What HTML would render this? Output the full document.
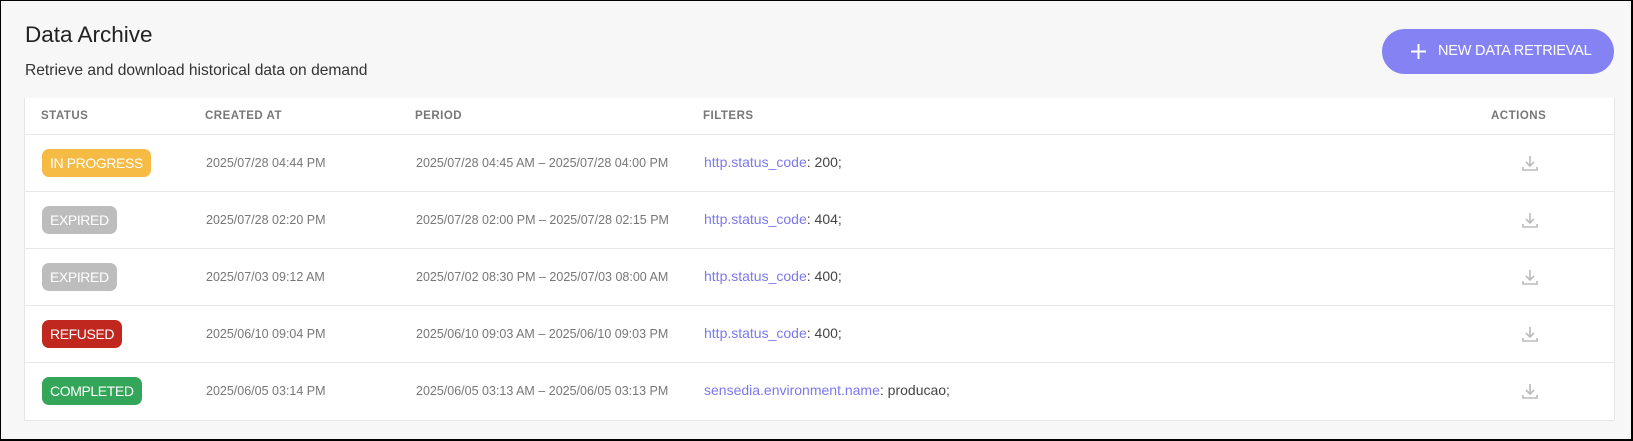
<!DOCTYPE html>
<html><head><meta charset="utf-8"><style>
*{box-sizing:border-box;margin:0;padding:0}
body{width:1633px;height:441px;background:#f7f7f7;font-family:"Liberation Sans",sans-serif;overflow:hidden}
.frame{position:absolute;left:0;top:0;width:1633px;height:441px;border:1px solid #000;border-right:2px solid #000;border-bottom:2px solid #000;background:#f7f7f7}
h1{position:absolute;left:24px;top:21px;font-size:22.5px;font-weight:normal;color:#222}
.sub{position:absolute;left:24px;top:61px;font-size:15.6px;color:#333}
.btn{position:absolute;left:1381px;top:28px;width:232px;height:45px;border-radius:23px;background:#8582f4;color:#fff;font-size:14.5px;line-height:45px;padding-left:56px;letter-spacing:-0.2px}
.btn svg{position:absolute;left:28px;top:14px}
.tbl{position:absolute;left:23px;top:97px;width:1591px;height:323px;background:#fff;border:1px solid #e6e6e6;border-top:none}
.hd{height:37px;border-bottom:1px solid #e8e8e8;position:relative}
.hd span{position:absolute;top:12px;font-size:11.5px;font-weight:bold;color:#777;letter-spacing:.5px}
.row{height:57px;border-bottom:1px solid #e8e8e8;position:relative;font-size:12.5px;color:#777}
.row:last-child{border-bottom:none}
.row>*{position:absolute}
.b{left:17px;top:14px;height:28px;line-height:28px;border-radius:7px;color:#fff;font-size:14px;padding:0 8px;letter-spacing:-0.4px}
.c{left:181px;top:21px}.p{left:391px;top:21px}
.f{left:679px;top:19px;font-size:14px;color:#444}.f i{font-style:normal;color:#7b78f0}
.dl{left:1496px;top:19px}
</style></head><body><div class="frame">
<h1>Data Archive</h1>
<div class="sub">Retrieve and download historical data on demand</div>
<div class="btn"><svg width="17" height="17"><path d="M8.5 1V16M1 8.5H16" stroke="#fff" stroke-width="2"/></svg>NEW DATA RETRIEVAL</div>
<div class="tbl">
<div class="hd"><span style="left:16px">STATUS</span><span style="left:180px">CREATED AT</span><span style="left:390px">PERIOD</span><span style="left:678px">FILTERS</span><span style="left:1466px">ACTIONS</span></div>
<div class="row"><span class="b" style="background:#f5bb45">IN PROGRESS</span><span class="c">2025/07/28 04:44 PM</span><span class="p">2025/07/28 04:45 AM – 2025/07/28 04:00 PM</span><span class="f"><i>http.status_code</i>: 200;</span><svg class="dl" width="18" height="18"><path d="M9 2V12M5 8L9 12L13 8M2 13V16H16V13" stroke="#bbb" stroke-width="1.6" fill="none"/></svg></div>
<div class="row"><span class="b" style="background:#bdbdbd">EXPIRED</span><span class="c">2025/07/28 02:20 PM</span><span class="p">2025/07/28 02:00 PM – 2025/07/28 02:15 PM</span><span class="f"><i>http.status_code</i>: 404;</span><svg class="dl" width="18" height="18"><path d="M9 2V12M5 8L9 12L13 8M2 13V16H16V13" stroke="#bbb" stroke-width="1.6" fill="none"/></svg></div>
<div class="row"><span class="b" style="background:#bdbdbd">EXPIRED</span><span class="c">2025/07/03 09:12 AM</span><span class="p">2025/07/02 08:30 PM – 2025/07/03 08:00 AM</span><span class="f"><i>http.status_code</i>: 400;</span><svg class="dl" width="18" height="18"><path d="M9 2V12M5 8L9 12L13 8M2 13V16H16V13" stroke="#bbb" stroke-width="1.6" fill="none"/></svg></div>
<div class="row"><span class="b" style="background:#c0271f">REFUSED</span><span class="c">2025/06/10 09:04 PM</span><span class="p">2025/06/10 09:03 AM – 2025/06/10 09:03 PM</span><span class="f"><i>http.status_code</i>: 400;</span><svg class="dl" width="18" height="18"><path d="M9 2V12M5 8L9 12L13 8M2 13V16H16V13" stroke="#bbb" stroke-width="1.6" fill="none"/></svg></div>
<div class="row"><span class="b" style="background:#34a65a">COMPLETED</span><span class="c">2025/06/05 03:14 PM</span><span class="p">2025/06/05 03:13 AM – 2025/06/05 03:13 PM</span><span class="f"><i>sensedia.environment.name</i>: producao;</span><svg class="dl" width="18" height="18"><path d="M9 2V12M5 8L9 12L13 8M2 13V16H16V13" stroke="#bbb" stroke-width="1.6" fill="none"/></svg></div>
</div>
</div></body></html>
